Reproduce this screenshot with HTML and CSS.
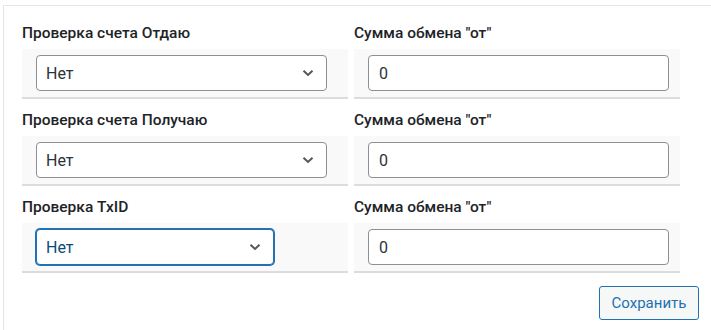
FILE: index.html
```html
<!DOCTYPE html>
<html lang="ru">
<head>
<meta charset="utf-8">
<link rel="stylesheet" href="styles.css">
</head>
<body>
<div class="panel">
  <div class="grid">
    <div class="field">
      <div class="label">Проверка счета Отдаю</div>
      <div class="box box-left">
        <div class="select"><span>Нет</span><svg class="chev" width="12" height="8" viewBox="0 0 12 8"><path d="M1.5 1.8 L6 6 L10.5 1.8" fill="none" stroke="#50575e" stroke-width="2"/></svg></div>
      </div>
    </div>
    <div class="field">
      <div class="label">Сумма обмена "от"</div>
      <div class="box box-right">
        <div class="input">0</div>
      </div>
    </div>
    <div class="field">
      <div class="label">Проверка счета Получаю</div>
      <div class="box box-left">
        <div class="select"><span>Нет</span><svg class="chev" width="12" height="8" viewBox="0 0 12 8"><path d="M1.5 1.8 L6 6 L10.5 1.8" fill="none" stroke="#50575e" stroke-width="2"/></svg></div>
      </div>
    </div>
    <div class="field">
      <div class="label">Сумма обмена "от"</div>
      <div class="box box-right">
        <div class="input">0</div>
      </div>
    </div>
    <div class="field">
      <div class="label">Проверка TxID</div>
      <div class="box box-left">
        <div class="select select-focus"><span>Нет</span><svg class="chev" width="12" height="8" viewBox="0 0 12 8"><path d="M1.5 1.8 L6 6 L10.5 1.8" fill="none" stroke="#50575e" stroke-width="2"/></svg></div>
      </div>
    </div>
    <div class="field">
      <div class="label">Сумма обмена "от"</div>
      <div class="box box-right">
        <div class="input">0</div>
      </div>
    </div>
  </div>
  <div class="actions">
    <button class="btn">Сохранить</button>
  </div>
</div>
</body>
</html>
```
FILE: styles.css
```css
html, body {
  margin: 0;
  padding: 0;
  overflow: hidden;
  background: #fff;
}
body {
  padding: 5px 0 0 3px;
  font-family: Roboto, "Noto Sans", sans-serif;
  font-size: 14px;
  color: #1d2327;
}
.panel {
  width: 740px;
  border-top: 1px solid #e5e5e5;
  border-left: 1px solid #e5e5e5;
  padding: 17px 0 20px 18px;
  box-sizing: border-box;
  height: 340px;
}
.grid {
  display: grid;
  grid-template-columns: 326px 326px;
  column-gap: 6px;
  row-gap: 11px;
}
.label {
  font-weight: 500;
  font-size: 15.5px;
  line-height: 20px;
  height: 20px;
  margin-bottom: 6px;
  color: #1d2327;
  white-space: nowrap;
}
.box {
  background: #f9f9f9;
  border-bottom: 2px solid #dcdcde;
  padding: 6px 0 6px 14px;
}
.select {
  width: 291px;
  height: 36px;
  box-sizing: border-box;
  border: 1px solid #8c8f94;
  border-radius: 4px;
  background: #fff;
  display: flex;
  align-items: center;
  justify-content: space-between;
  padding: 0 12px 0 9px;
  color: #2c3338;
  font-size: 16px;
}
.select-focus {
  width: 238px;
  border-color: #2271b1;
  box-shadow: 0 0 0 1px #2271b1;
  color: #0a4b78;
}
.chev {
  display: block;
}
.input {
  width: 301px;
  height: 36px;
  box-sizing: border-box;
  border: 1px solid #8c8f94;
  border-radius: 4px;
  background: #fff;
  display: flex;
  align-items: center;
  padding: 0 10px;
  color: #2c3338;
  font-size: 16px;
}
.actions {
  display: flex;
  justify-content: flex-end;
  width: 677px;
  margin-top: 13px;
}
.btn {
  height: 34px;
  width: 100px;
  box-sizing: border-box;
  border: 1px solid #2271b1;
  border-radius: 3px;
  background: #f6f7f7;
  color: #2271b1;
  font-family: Roboto, "Noto Sans", sans-serif;
  font-size: 15px;
  padding: 0;
}
```
